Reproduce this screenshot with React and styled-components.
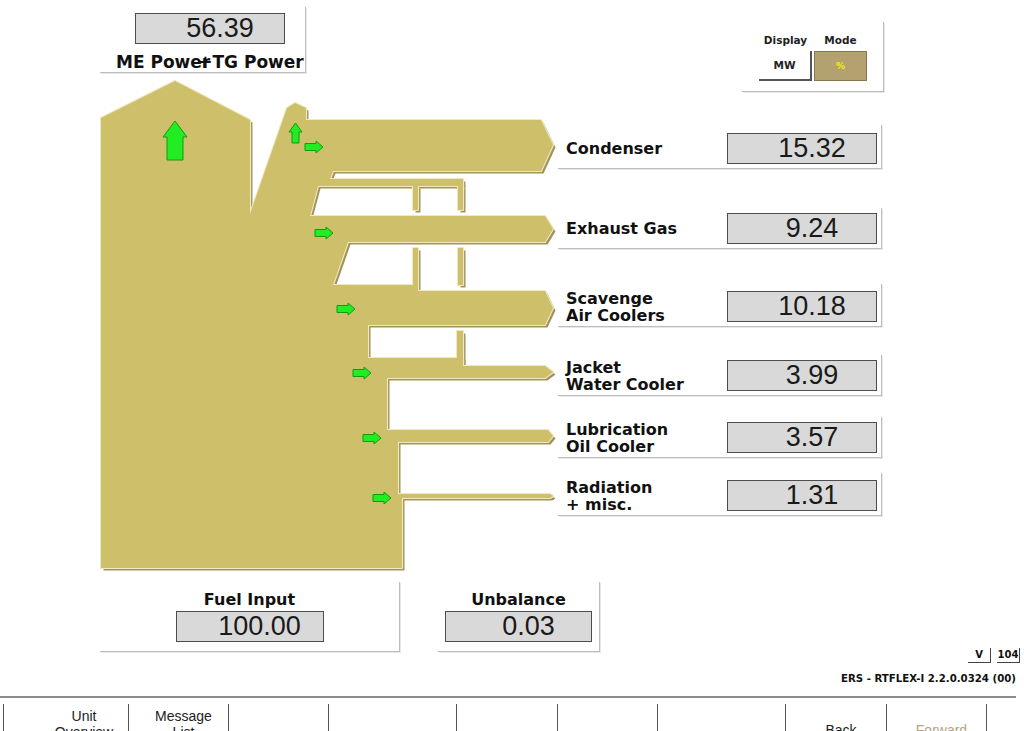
import React from "react";
import styled, { createGlobalStyle } from "styled-components";

const GlobalStyle = createGlobalStyle`
  html, body { margin: 0; padding: 0; background: #ffffff; }
  body {
    width: 1024px; height: 731px; overflow: hidden;
    font-family: "DejaVu Sans", Verdana, sans-serif; color: #111;
  }
  * { box-sizing: border-box; }
`;

const Page = styled.div`
  width: 1024px; height: 731px;
  display: flex; flex-direction: column;
`;

const Main = styled.div`
  display: grid;
  grid-template-columns: 100px 458px 326px 1fr;
  grid-template-rows: 75px 505px 68px;
  height: 648px;
`;

const Frame = styled.div`
  border-right: 1px solid #bdbdbd;
  border-bottom: 1px solid #bdbdbd;
  box-shadow: 1px 1px 0 #e8e8e8;
`;

const TopPanel = styled(Frame)`
  grid-column: 2; grid-row: 1;
  width: 206px; height: 66px; margin-top: 7px; padding-top: 6px;
  display: flex; flex-direction: column; align-items: flex-start;
`;

const ValueBox = styled.div`
  width: ${p => p.$w || 150}px; height: 31px;
  border: 1px solid #4d4d4d; background: #d9d9d9;
  display: flex; align-items: center; justify-content: center;
  padding-left: 20px;
  font: 27px/1 "Liberation Sans", Arial, sans-serif; color: #1a1a1a;
  margin-left: ${p => p.$ml || 0}px; margin-top: ${p => p.$mt || 0}px;
  flex-shrink: 0;
`;

const TopLabel = styled.div`
  margin: 8px 0 0 16px;
  font: bold 17px/20px "DejaVu Sans", Verdana, sans-serif;
  white-space: nowrap;
`;

const Plus = styled.span`
  margin-left: -12px;
`;

const RightCol = styled.div`
  grid-column: 3; grid-row: 1 / 3;
  display: flex; flex-direction: column;
`;

const DisplayPanel = styled(Frame)`
  align-self: flex-end;
  width: 142px; height: 70px; margin-top: 22px;
  padding: 11px 0 0 17px;
  display: grid;
  grid-template-columns: 53px 53px;
  grid-template-rows: 14px 30px;
  column-gap: 2px; row-gap: 4px;
`;

const ModeLabel = styled.div`
  text-align: center;
  font: bold 10.5px/14px "DejaVu Sans", Verdana, sans-serif; color: #222;
`;

const ModeButton = styled.div`
  display: flex; align-items: center; justify-content: center;
  font: bold ${p => (p.$active ? 9 : 10.5)}px "DejaVu Sans", Verdana, sans-serif;
  background: ${p => (p.$active ? "#b3a170" : "#ffffff")};
  color: ${p => (p.$active ? "#f4f400" : "#222")};
  border: ${p => (p.$active ? "1px solid #857550" : "none")};
  border-right: ${p => (p.$active ? "1px solid #857550" : "2px solid #555")};
  border-bottom: ${p => (p.$active ? "1px solid #857550" : "2px solid #555")};
`;

const FlowRow = styled(Frame)`
  margin-top: ${p => p.$mt}px; margin-right: 2px;
  height: ${p => p.$h}px;
  display: flex; align-items: flex-end;
  padding: 0 4px 4px 8px;
`;

const FlowLabel = styled.div`
  flex: 1; height: 31px;
  display: flex; align-items: center;
  font: bold 16px/17px "DejaVu Sans", Verdana, sans-serif;
  white-space: nowrap;
`;

const Diagram = styled.svg`
  grid-column: 2; grid-row: 2;
  display: block;
`;

const BottomRow = styled.div`
  grid-column: 2 / 4; grid-row: 3;
  display: flex; align-items: flex-start; gap: 38px;
  padding-top: 2px;
`;

const SumPanel = styled(Frame)`
  width: ${p => p.$w}px; height: 70px;
  display: flex; flex-direction: column; align-items: center;
  padding-top: 9px;
`;

const SumLabel = styled.div`
  font: bold 16px/18px "DejaVu Sans", Verdana, sans-serif;
  margin-bottom: 2px;
`;

const Footer = styled.div`
  display: flex; flex-direction: column; flex: 1;
`;

const ViewRow = styled.div`
  display: flex; justify-content: flex-end;
  padding-right: 4px; height: 15px;
`;

const ViewTab = styled.div`
  width: 23px; margin-left: ${p => p.$ml || 0}px;
  border-right: 1px solid #444; border-bottom: 1px solid #444;
  text-align: center;
  font: bold 10px/14px "DejaVu Sans", Verdana, sans-serif; color: #111;
`;

const Version = styled.div`
  margin-top: 9px; padding-right: 8px;
  text-align: right;
  font: bold 10.2px/14px "DejaVu Sans", Verdana, sans-serif; color: #111;
`;

const NavBar = styled.div`
  flex: 1;
  margin-top: 10px; margin-right: 8px;
  border-top: 2px solid #8c8c8c;
  padding: 6px 0 0 3px;
  display: flex;
`;

const NavButton = styled.div`
  width: ${p => p.$w}px;
  border-right: 1px solid #555;
  border-left: ${p => (p.$first ? "1px solid #555" : "none")};
  padding-top: ${p => p.$pt || 4}px;
  padding-left: ${p => p.$pl || 10}px;
  display: flex; flex-direction: column; align-items: center;
  font: 14px/16px "Liberation Sans", Arial, sans-serif;
  color: ${p => (p.$disabled ? "#b5a37d" : "#222")};
`;

const TAN = "#cebf6a";
const LIGHT = "#f0e8c2";
const DARK = "#a0935d";

const BODY =
  "101,568 101,118 175,81 250,120 250,214 287,108 295,103 306,108 306,120 " +
  "541,120 553,145 541,171 333,171 330,179 463,179 463,186 318,186 310,216 " +
  "545,216 553,229 545,242 348,242 333,285 413,285 413,291 545,291 553,308 545,325 " +
  "368,325 368,358 463,358 463,366 545,366 553,372 545,378 387,378 387,430 " +
  "548,430 553,436 548,442 398,442 398,494 550,494 553,496 550,498 402,498 402,568";

const PIPES = [
  [413, 186, 5, 24],
  [458, 186, 5, 24],
  [413, 248, 5, 43],
  [458, 248, 5, 37],
  [457, 331, 6, 35],
];

const RIGHT_ARROWS = [
  [305, 141],
  [315, 227],
  [337, 303],
  [353, 367],
  [363, 432],
  [373, 492],
];

function Shapes(props) {
  return (
    <g {...props}>
      <polygon points={BODY} />
      {PIPES.map(([x, y, w, h], i) => (
        <rect key={i} x={x} y={y} width={w} height={h} />
      ))}
    </g>
  );
}

function SankeyDrawing() {
  return (
    <Diagram width="458" height="505" viewBox="100 75 458 505">
      <Shapes fill={DARK} transform="translate(2.5 2.5)" />
      <Shapes fill={LIGHT} stroke={LIGHT} strokeWidth="2.2" strokeLinejoin="round" />
      <Shapes fill={TAN} />
      <g fill="#22ec22" stroke="#139a13" strokeWidth="1">
        <path d="M163,137 L175,121 L187,137 H183 V160 H167 V137 Z" />
        <path d="M289,132 L295.5,123 L302,132 H299 V143 H292 V132 Z" />
        {RIGHT_ARROWS.map(([x, y], i) => (
          <path
            key={i}
            d={`M${x},${y + 2.5} h11 v-2.5 l7,6 l-7,6 v-2.5 h-11 Z`}
          />
        ))}
      </g>
    </Diagram>
  );
}

const FLOWS = [
  { label: ["Condenser"], value: "15.32", mt: 33, h: 44 },
  { label: ["Exhaust Gas"], value: "9.24", mt: 39, h: 41 },
  { label: ["Scavenge", "Air Coolers"], value: "10.18", mt: 35, h: 43 },
  { label: ["Jacket", "Water Cooler"], value: "3.99", mt: 28, h: 41 },
  { label: ["Lubrication", "Oil Cooler"], value: "3.57", mt: 21, h: 41 },
  { label: ["Radiation", "+ misc."], value: "1.31", mt: 15, h: 43 },
];

const NAV = [
  { w: 126, lines: ["Unit", "Overview"], first: true, pl: 36 },
  { w: 100, lines: ["Message", "List"] },
  { w: 100, lines: [] },
  { w: 128, lines: [] },
  { w: 101, lines: [] },
  { w: 100, lines: [] },
  { w: 128, lines: [] },
  { w: 101, lines: ["Back"], pt: 18 },
  { w: 100, lines: ["Forward"], pt: 18, disabled: true },
];

export default function App() {
  return (
    <Page>
      <GlobalStyle />
      <Main>
        <TopPanel>
          <ValueBox $ml={35}>56.39</ValueBox>
          <TopLabel>
            ME Power<Plus>+</Plus>TG Power
          </TopLabel>
        </TopPanel>

        <SankeyDrawing />

        <RightCol>
          <DisplayPanel>
            <ModeLabel>Display</ModeLabel>
            <ModeLabel>Mode</ModeLabel>
            <ModeButton>MW</ModeButton>
            <ModeButton $active>%</ModeButton>
          </DisplayPanel>
          {FLOWS.map(f => (
            <FlowRow key={f.value} $mt={f.mt} $h={f.h}>
              <FlowLabel>
                <div>
                  {f.label.map((l, i) => (
                    <div key={i}>{l}</div>
                  ))}
                </div>
              </FlowLabel>
              <ValueBox>{f.value}</ValueBox>
            </FlowRow>
          ))}
        </RightCol>

        <BottomRow>
          <SumPanel $w={300}>
            <SumLabel>Fuel Input</SumLabel>
            <ValueBox $w={148}>100.00</ValueBox>
          </SumPanel>
          <SumPanel $w={162}>
            <SumLabel>Unbalance</SumLabel>
            <ValueBox $w={147}>0.03</ValueBox>
          </SumPanel>
        </BottomRow>
      </Main>

      <Footer>
        <ViewRow>
          <ViewTab>V</ViewTab>
          <ViewTab $ml={6}>104</ViewTab>
        </ViewRow>
        <Version>ERS - RTFLEX-I 2.2.0.0324 (00)</Version>
        <NavBar>
          {NAV.map((b, i) => (
            <NavButton
              key={i}
              $w={b.w}
              $first={b.first}
              $pt={b.pt}
              $pl={b.pl}
              $disabled={b.disabled}
            >
              {b.lines.map(l => (
                <span key={l}>{l}</span>
              ))}
            </NavButton>
          ))}
        </NavBar>
      </Footer>
    </Page>
  );
}
